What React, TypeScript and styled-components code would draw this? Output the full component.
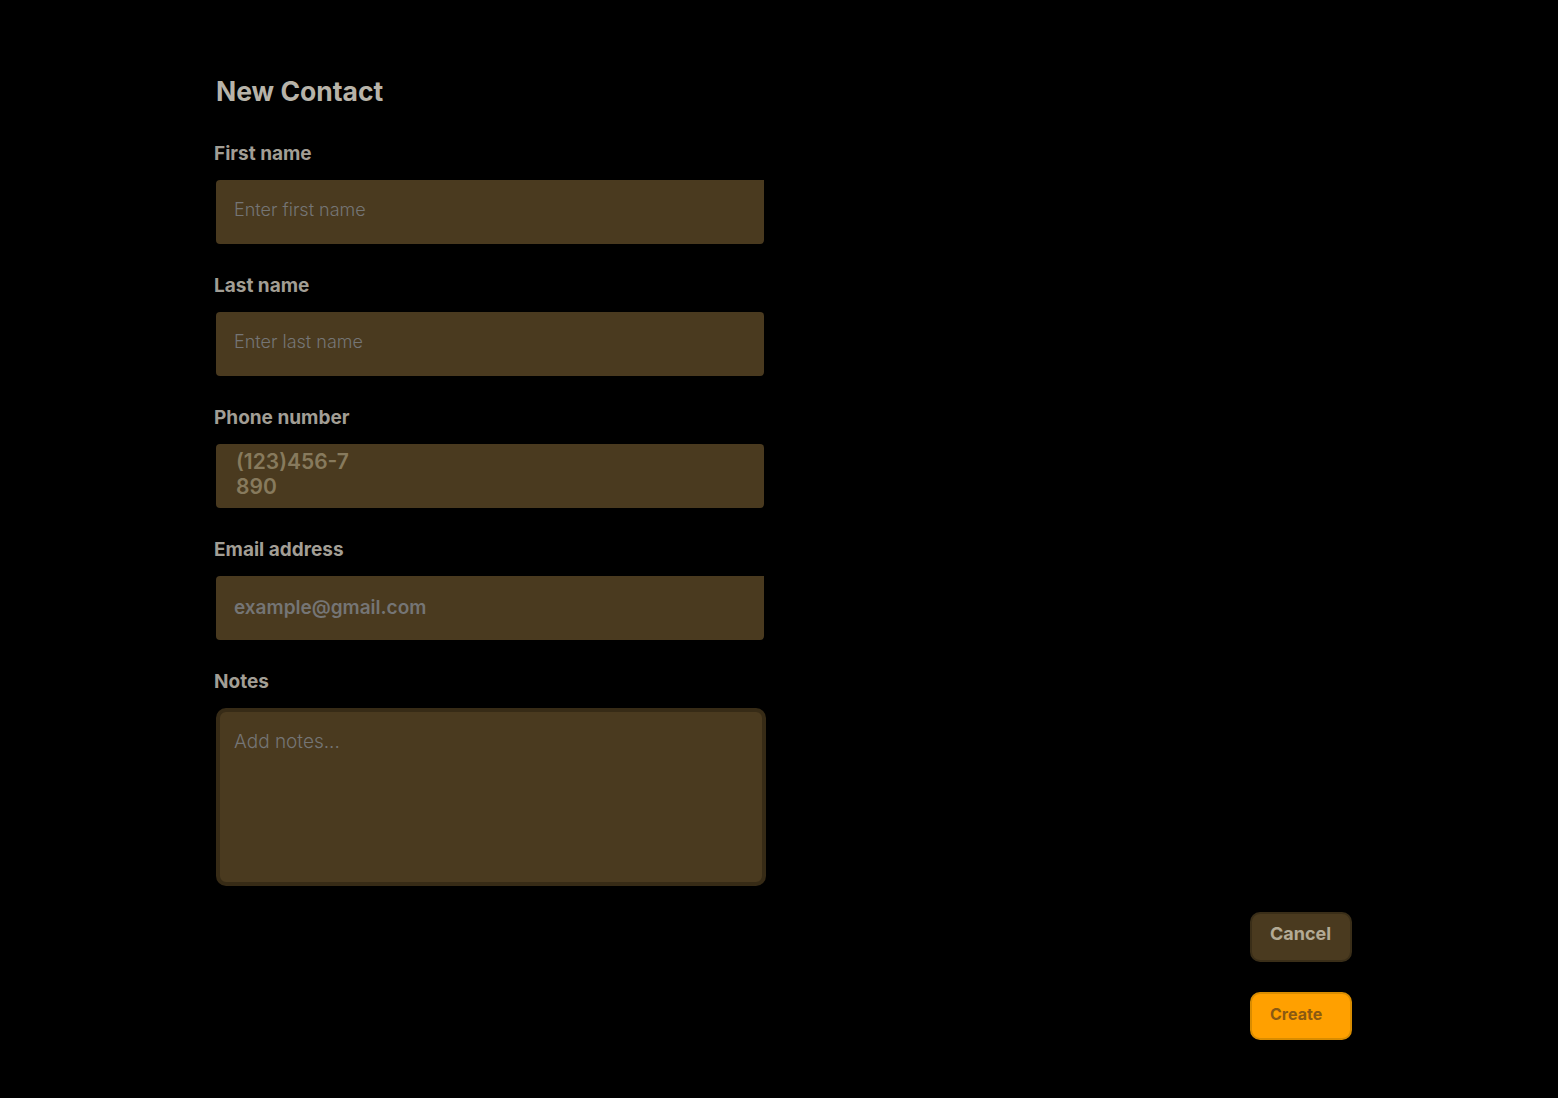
import React from 'react'
import styled, { createGlobalStyle } from 'styled-components'

const GlobalStyle = createGlobalStyle`
    html, body {
        margin: 0;
        padding: 0;
        background: #000;
    }
    body {
        font-family: Inter, "Noto Sans", sans-serif;
    }
`

const Page = styled.div`
    width: 1558px;
    height: 1098px;
    background-color: #000;
    box-sizing: border-box;
    padding: 76px 206px 0 214px;
    display: flex;
    flex-direction: column;
`

const Form = styled.form`
    width: 552px;
    display: flex;
    flex-direction: column;
`

const Title = styled.h1`
    margin: 0 0 36px 2px;
    font-size: 26.5px;
    line-height: 30px;
    font-weight: 700;
    color: #b7b3a9;
`

const Field = styled.div`
    display: flex;
    flex-direction: column;
    margin-bottom: 30px;
`

const Label = styled.label`
    font-size: 19px;
    line-height: 23px;
    font-weight: 650;
    color: #a29e95;
    margin-bottom: 15px;
`

const TextInput = styled.input<{ $sharp?: boolean; $bold?: boolean }>`
    width: 548px;
    height: 64px;
    margin-left: 2px;
    box-sizing: border-box;
    border: none;
    outline: none;
    border-radius: ${p => (p.$sharp ? '4px 0 4px 4px' : '4px')};
    background-color: #4a3a1f;
    padding: ${p => (p.$bold ? '0 18px 2px' : '0 18px 6px')};
    font-family: Inter, "Noto Sans", sans-serif;
    font-size: ${p => (p.$bold ? '19px' : '18px')};
    font-weight: ${p => (p.$bold ? 600 : 300)};
    color: #cfc6b0;

    ::placeholder {
        color: ${p => (p.$bold ? '#8a7b58' : '#7b6e50')};
        opacity: 1;
    }
`

const PhoneBox = styled.div`
    width: 548px;
    height: 64px;
    margin-left: 2px;
    box-sizing: border-box;
    border-radius: 4px;
    background-color: #4a3a1f;
    padding: 5px 20px 0;

    span {
        display: block;
        width: 122px;
        word-break: break-all;
        font-size: 21px;
        line-height: 25px;
        font-weight: 600;
        color: #877a5d;
    }
`

const Notes = styled.textarea`
    width: 550px;
    height: 178px;
    margin-left: 2px;
    box-sizing: border-box;
    resize: none;
    outline: none;
    border: 4px solid #372b16;
    border-radius: 10px;
    background-color: #4a3a1f;
    padding: 18px 14px;
    font-family: Inter, "Noto Sans", sans-serif;
    font-size: 19px;
    line-height: 24px;
    font-weight: 300;
    color: #cfc6b0;

    ::placeholder {
        color: #7b6e50;
        opacity: 1;
    }
`

const Actions = styled.div`
    align-self: flex-end;
    margin-top: -4px;
    display: flex;
    flex-direction: column;
    gap: 30px;
`

const Button = styled.button<{ $primary?: boolean }>`
    width: 102px;
    height: ${p => (p.$primary ? '48px' : '50px')};
    box-sizing: border-box;
    border-radius: 10px;
    border: 2px solid ${p => (p.$primary ? '#d98c00' : '#3a2e18')};
    background-color: ${p => (p.$primary ? '#ffa000' : '#4a3a1f')};
    color: ${p => (p.$primary ? '#8a5a12' : '#b3aa95')};
    font-family: Inter, "Noto Sans", sans-serif;
    font-size: ${p => (p.$primary ? '16px' : '18px')};
    font-weight: 700;
    text-align: left;
    padding: ${p => (p.$primary ? '0 0 4px 18px' : '0 0 8px 18px')};
    cursor: pointer;
`

export default function App() {
    return (
        <Page>
            <GlobalStyle />
            <Form onSubmit={e => e.preventDefault()}>
                <Title>New Contact</Title>
                <Field>
                    <Label>First name</Label>
                    <TextInput $sharp placeholder="Enter first name" />
                </Field>
                <Field>
                    <Label>Last name</Label>
                    <TextInput placeholder="Enter last name" />
                </Field>
                <Field>
                    <Label>Phone number</Label>
                    <PhoneBox>
                        <span>(123)456-7890</span>
                    </PhoneBox>
                </Field>
                <Field>
                    <Label>Email address</Label>
                    <TextInput $sharp $bold placeholder="example@gmail.com" />
                </Field>
                <Field>
                    <Label>Notes</Label>
                    <Notes placeholder="Add notes..." />
                </Field>
            </Form>
            <Actions>
                <Button type="button">Cancel</Button>
                <Button type="button" $primary>Create</Button>
            </Actions>
        </Page>
    )
}
